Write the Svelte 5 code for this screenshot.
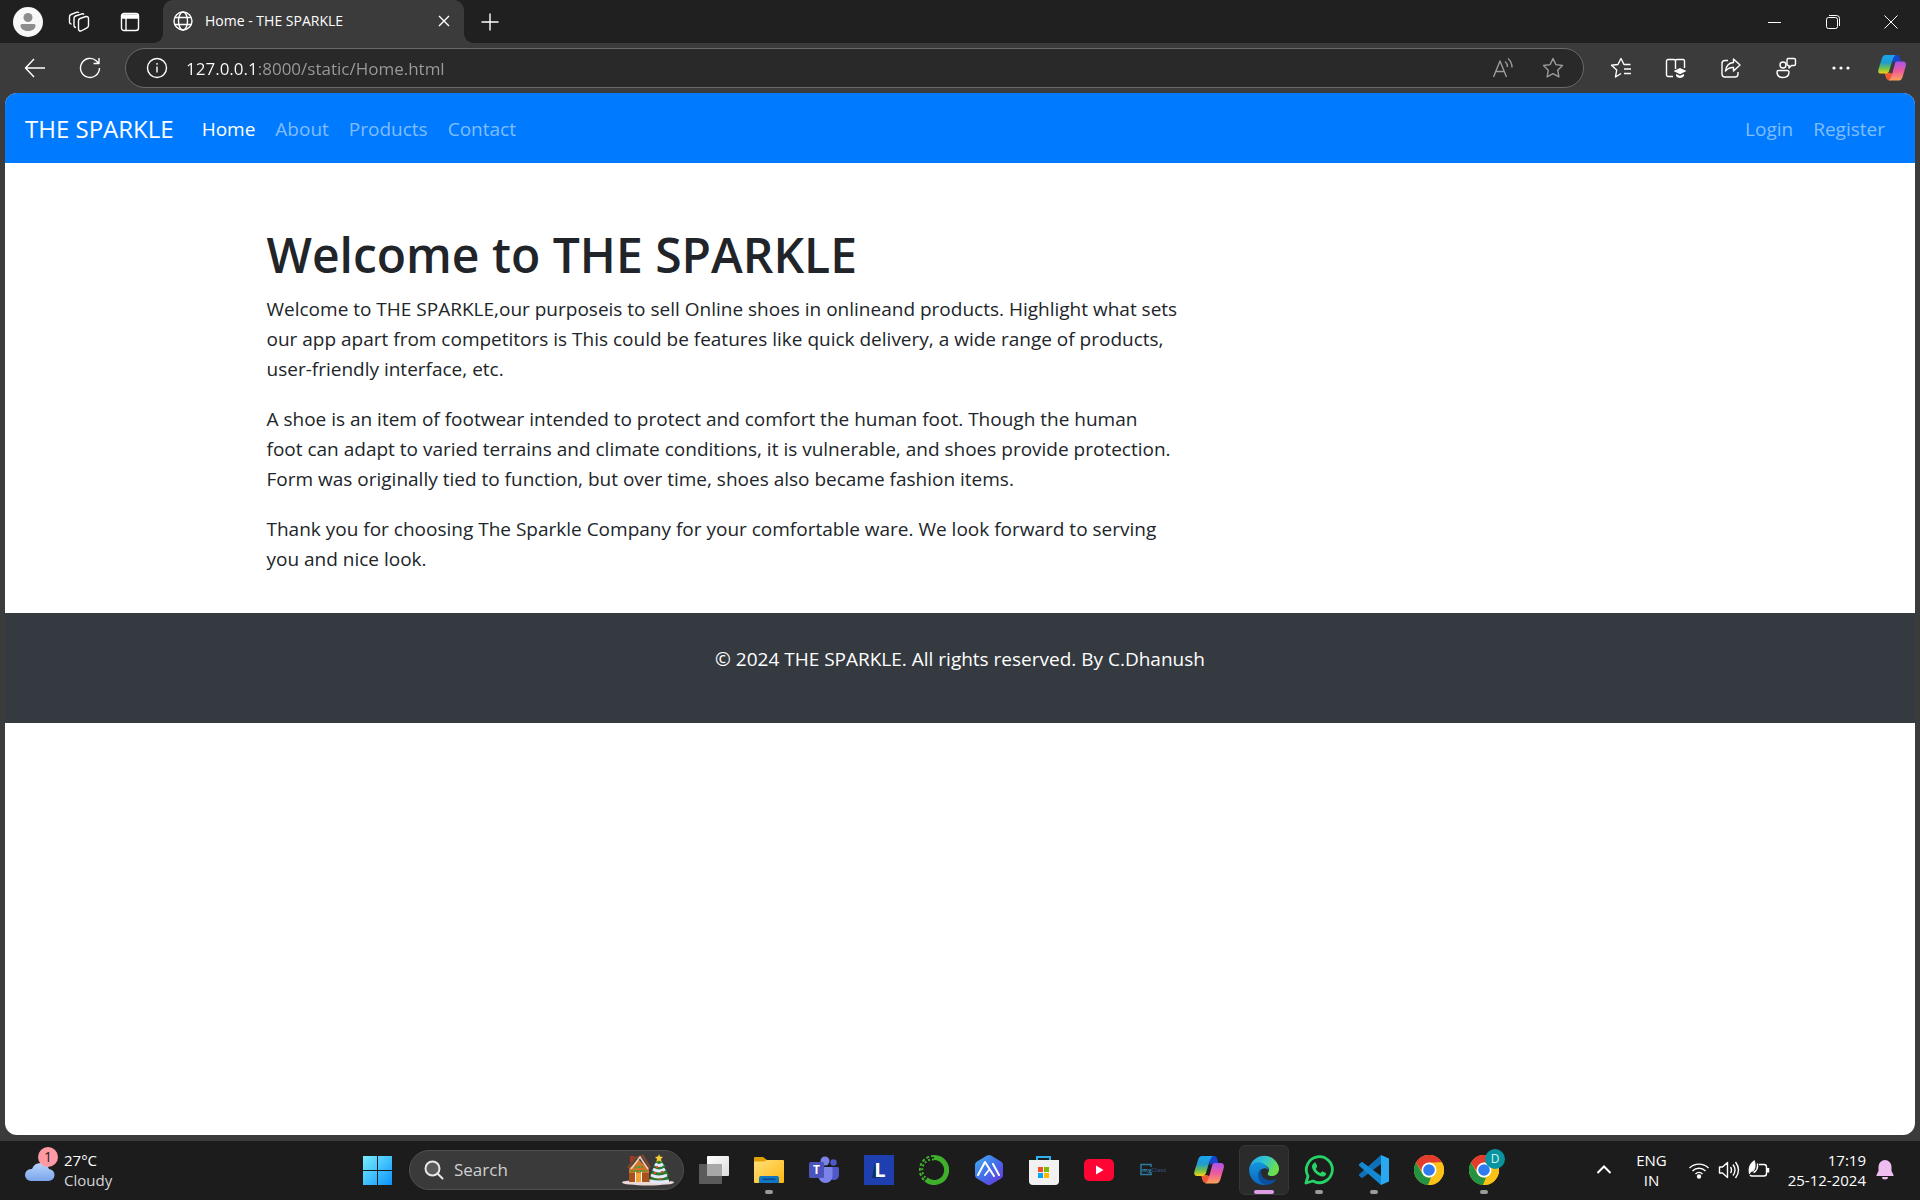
<script>
  const leftLinks = ['Home', 'About', 'Products', 'Contact'];
  const rightLinks = ['Login', 'Register'];
  const apps = [
    { id: 'taskview', label: 'Task view' },
    { id: 'explorer', label: 'File Explorer', state: 'open' },
    { id: 'teams', label: 'Teams' },
    { id: 'letter', label: 'L app' },
    { id: 'anaconda', label: 'Anaconda' },
    { id: 'hexagon', label: 'AI studio' },
    { id: 'store', label: 'Store' },
    { id: 'youtube', label: 'YouTube' },
    { id: 'portal', label: 'Portal' },
    { id: 'copilot', label: 'Copilot' },
    { id: 'edge', label: 'Edge', state: 'active' },
    { id: 'whatsapp', label: 'WhatsApp', state: 'open' },
    { id: 'vscode', label: 'VS Code', state: 'open' },
    { id: 'chrome', label: 'Chrome' },
    { id: 'profile', label: 'Chrome profile', state: 'open' }
  ];
  let address = $state('127.0.0.1:8000/static/Home.html');
  let query = $state('');
</script>

{#snippet copilot(size, key)}
  <svg width={size} height={size} viewBox="0 0 30 30">
    <defs>
      <linearGradient id="{key}a" x1="0" y1="0" x2="0" y2="1"><stop offset="0" stop-color="#1aa5f0" /><stop offset=".4" stop-color="#1f9bd0" /><stop offset=".72" stop-color="#6fc04c" /><stop offset="1" stop-color="#f5d414" /></linearGradient>
      <linearGradient id="{key}b" x1="0" y1="0" x2="0" y2="1"><stop offset="0" stop-color="#a954ee" /><stop offset=".5" stop-color="#ee5a9c" /><stop offset="1" stop-color="#ffa357" /></linearGradient>
    </defs>
    <path d="M16 1h4c2 0 2.600 1 3.200 3l1.300 4h-5l-4 2z" fill="#1745cf" />
    <path d="M7 20h6l4 2-3 6h-2c-2 0-3-1-3.600-3z" fill="#ef5a35" />
    <path d="M8 1h11c-2 1-3 4-4 7l-3 10c-.6 2-2 3-4 3H3c-3 0-3-3-2.400-5L4 5c.8-2.500 2-4 4-4z" fill="url(#{key}a)" />
    <path d="M20 8h7c3 0 3.400 3 2.600 5.500L26.500 24c-.8 3-2.500 4.500-4.500 4.500H11c2-1 3-3 4-6.500l3-11c.4-2 1-3 2-3z" fill="url(#{key}b)" />
  </svg>
{/snippet}

{#snippet chrome()}
  <circle cx="15" cy="15" r="15" fill="#fbc116" />
  <path d="M2 7.500A15 15 0 0 1 28 7.500H15L9 18z" fill="#e33b2e" />
  <path d="M2 7.500 8.500 18.800A7.500 7.500 0 0 0 17 22.200L14 30A15 15 0 0 1 2 7.500z" fill="#229342" />
  <path d="M14 30l7.500-11.200A7.500 7.500 0 0 0 21.500 7.500H28A15 15 0 0 1 14 30z" fill="#fbc116" />
  <circle cx="15" cy="15" r="7.500" fill="#fff" />
  <circle cx="15" cy="15" r="5.800" fill="#2f7bf0" />
{/snippet}

{#snippet appIcon(id)}
  {#if id === 'copilot'}
    {@render copilot(30, 'task')}
  {:else}
    <svg width="30" height="30" viewBox="0 0 30 30">
      {#if id === 'taskview'}
        <defs><linearGradient id="tv" x1="0" y1="0" x2="1" y2="1"><stop stop-color="#fff" /><stop offset="1" stop-color="#dcdcdc" /></linearGradient></defs>
        <rect x="8" y="1" width="22" height="20" rx="1" fill="url(#tv)" />
        <rect x="0" y="9" width="23" height="20" rx="1" fill="#5b5b5b" />
        <path d="M8 9h15v12H8z" fill="#a8a8a8" />
      {:else if id === 'explorer'}
        <defs><linearGradient id="fo" x1="0" y1="0" x2="1" y2="1"><stop stop-color="#ffe07a" /><stop offset="1" stop-color="#ffb70f" /></linearGradient></defs>
        <path d="M0 3a1 1 0 0 1 1-1h8l4 3v6H0z" fill="#e0a008" />
        <path d="M0 6.500h10l3-1.500h16a1 1 0 0 1 1 1v21a1 1 0 0 1-1 1H1a1 1 0 0 1-1-1z" fill="url(#fo)" />
        <path d="M5 28v-5a2 2 0 0 1 2-2h16a2 2 0 0 1 2 2v5z" fill="#0f75c4" />
        <rect x="8.500" y="23.500" width="13" height="1.500" rx=".7" fill="#0a4a84" />
      {:else if id === 'teams'}
        <circle cx="24.500" cy="7.500" r="3.200" fill="#5059c9" />
        <path d="M19 12h9.500a1.500 1.500 0 0 1 1.500 1.500V20a5 5 0 0 1-8 4z" fill="#5059c9" />
        <circle cx="16" cy="6" r="4.500" fill="#7b83eb" />
        <path d="M10 12h12.500a1 1 0 0 1 1 1v8a7 7 0 0 1-14 0z" fill="#7b83eb" />
        <rect x="0" y="7" width="15" height="16" rx="1.500" fill="#4b53bc" />
        <text x="7.500" y="19" text-anchor="middle" font-size="12" font-weight="700" fill="#fff">T</text>
      {:else if id === 'letter'}
        <path d="M0 0h30v30H0z" fill="#1d3fb0" />
        <path d="M11 7 8 23h8l-3-3z" fill="#0d3059" />
        <text x="16" y="22" text-anchor="middle" font-size="20" font-weight="700" fill="#fff">L</text>
      {:else if id === 'anaconda'}
        <path d="M15 2.500a12.500 12.500 0 1 1-8 22" fill="none" stroke="#3eb02a" stroke-width="5" />
        <path d="M15 1A14 14 0 0 0 5 25" fill="none" stroke="#3eb02a" stroke-width="2" stroke-dasharray="3 2" />
        <path d="M15 4.500A10.500 10.500 0 0 0 7 23" fill="none" stroke="#3eb02a" stroke-width="2" stroke-dasharray="2 2" />
      {:else if id === 'hexagon'}
        <defs><linearGradient id="hx" x1="0" y1="0" x2="1" y2="1"><stop stop-color="#45b0f5" /><stop offset=".5" stop-color="#426fe8" /><stop offset="1" stop-color="#6f2ee0" /></linearGradient></defs>
        <path d="M13 .6a4 4 0 0 1 4 0l10 5.800a4 4 0 0 1 2 3.400v10.400a4 4 0 0 1-2 3.400l-10 5.800a4 4 0 0 1-4 0L3 23.600a4 4 0 0 1-2-3.400V9.800a4 4 0 0 1 2-3.400z" fill="url(#hx)" />
        <path d="M4 20 11 7l9 14M11 20l4-5M19 9l6 11" fill="none" stroke="#fff" stroke-width="2" stroke-linecap="round" stroke-linejoin="round" />
      {:else if id === 'store'}
        <path d="M8 7V2h13v5" fill="none" stroke="#2cb1ee" stroke-width="2" />
        <path d="M0 5h30v21a4 4 0 0 1-4 4H4a4 4 0 0 1-4-4z" fill="#f1f1f1" />
        <path d="M9 12h5v5H9z" fill="#f25022" /><path d="M15 12h5v5h-5z" fill="#7fba00" />
        <path d="M9 18h5v5H9z" fill="#00a4ef" /><path d="M15 18h5v5h-5z" fill="#ffb900" />
      {:else if id === 'youtube'}
        <rect y="4" width="30" height="22" rx="5" fill="#ff0533" />
        <path d="M12 10.500v9l7.500-4.500z" fill="#fff" />
      {:else if id === 'portal'}
        <path d="M12 12V9.500H2v10h10V17" fill="none" stroke="#2d7ba0" stroke-width="1.500" />
        <text x="3" y="17" font-size="6" font-weight="700" fill="#3389b0">my</text>
        <text x="12" y="17" font-size="6" font-weight="700" fill="#2f4466">Class</text>
      {:else if id === 'edge'}
        <defs>
          <linearGradient id="eg" x1="0" y1="0" x2="1" y2=".4"><stop stop-color="#249fe0" /><stop offset=".5" stop-color="#2fc4d5" /><stop offset="1" stop-color="#6be04a" /></linearGradient>
          <linearGradient id="eb" x1="0" y1="0" x2="0" y2="1"><stop stop-color="#1595df" /><stop offset="1" stop-color="#0c66bd" /></linearGradient>
        </defs>
        <path d="M.5 13A15 15 0 0 1 30 13c.3 5-3 8-7 8-3 0-5-1-4-3 2-3 1-7-4-8C9 8 3 9 .5 13z" fill="url(#eg)" />
        <path d="M.3 13C3 7 10 6 15 9c3 2 4 4 4 6-2-3-7-2-8 2-1 5 3 9 7 10l-1 3A15 15 0 0 1 .3 13z" fill="url(#eb)" />
        <path d="M12 14c-5 4-3 13 4 16 5 .3 9-2 11.500-6-6 3-13 1-15-4-.7-2-.8-4-.5-6z" fill="#0b4f9f" />
      {:else if id === 'whatsapp'}
        <path d="M2 28l2-7A13 13 0 1 1 9 26z" fill="#1d1d1d" stroke="#25d366" stroke-width="2.800" stroke-linejoin="round" />
        <path d="M10 8c1-1 2 0 2.300 1l1 2.500-1.500 2.200c1 2 2.500 3.500 4.600 4.400l1.800-1.900 3.300 1.600c1 .5.800 1.500 0 2.500-1.500 1.700-4 1.500-7 0-3.300-1.700-6-5-6.500-8-.3-2 .8-3.300 2-4.300z" fill="#25d366" />
      {:else if id === 'vscode'}
        <path d="M22 0 30 3.500v23L22 30z" fill="#2aa9f3" />
        <path d="M22 0v9L4 22.500a1.500 1.500 0 0 1-2 0l-1.600-1.600a1.300 1.300 0 0 1 0-2z" fill="#0f70b7" />
        <path d="M22 30v-9L4 7.500a1.500 1.500 0 0 0-2 0L.4 9a1.300 1.300 0 0 0 0 2z" fill="#1489d2" />
      {:else}
        {@render chrome()}
      {/if}
    </svg>
  {/if}
{/snippet}

<div class="desktop">
  <header class="tabs">
    <button class="avatar" aria-label="Profile">
      <svg width="30" height="30" viewBox="0 0 30 30"><circle cx="15" cy="15" r="15" fill="#f8f8f8" /><circle cx="15" cy="10.500" r="4.500" fill="#8d8d8d" /><path d="M9 17h12a1.500 1.500 0 0 1 1.500 1.500c0 4-4 5.500-7.500 5.500s-7.500-1.500-7.500-5.500A1.500 1.500 0 0 1 9 17z" fill="#8d8d8d" /></svg>
    </button>
    <button aria-label="Workspaces">
      <svg class="line" width="22" height="22" viewBox="0 0 22 22"><path d="M12 7.500 18 5.500a2 2 0 0 1 2.500 2v7a2.500 2.500 0 0 1-1.500 2.300L13 20a2 2 0 0 1-2.500-2V10a2.500 2.500 0 0 1 1.500-2.500z" /><path d="M8 16.500A2 2 0 0 1 6 15V7.500A2.500 2.500 0 0 1 7.500 5l6.500-2.200a2 2 0 0 1 2 .7M3.500 13A2 2 0 0 1 1.500 11V6A2.500 2.500 0 0 1 3 3.500L9 1.200a2 2 0 0 1 2 .5" /></svg>
    </button>
    <button aria-label="Tab actions">
      <svg class="line" width="20" height="20" viewBox="0 0 20 20"><rect x="1.500" y="1.500" width="17" height="17" rx="2.500" /><path d="M2 3h16v3H2z" fill="#fff" /><path d="M6 6v12" /></svg>
    </button>
    <div class="tab">
      <svg class="line globe" width="20" height="20" viewBox="0 0 20 20"><circle cx="10" cy="10" r="9" /><ellipse cx="10" cy="10" rx="4.500" ry="9" /><path d="M2 6.500h16M2 13.500h16" /></svg>
      <span class="title">Home - THE SPARKLE</span>
      <button aria-label="Close tab"><svg class="line" width="12" height="12" viewBox="0 0 12 12"><path d="m1 1 10 10M11 1 1 11" /></svg></button>
    </div>
    <button class="new" aria-label="New tab"><svg class="line" width="18" height="18" viewBox="0 0 18 18"><path d="M9 .5v17M.5 9h17" /></svg></button>
    <div class="window">
      <button aria-label="Minimize"><svg class="line thin" width="14" height="14" viewBox="0 0 14 14"><path d="M0 7.500h13" /></svg></button>
      <button aria-label="Restore"><svg class="line thin" width="14" height="14" viewBox="0 0 14 14"><rect x=".5" y="2.500" width="11" height="11" rx="2" /><path d="M3 .5h7.500a3 3 0 0 1 3 3V11" /></svg></button>
      <button aria-label="Close"><svg class="line thin" width="14" height="14" viewBox="0 0 14 14"><path d="m.5.500 13 13M13.500.500l-13 13" /></svg></button>
    </div>
  </header>

  <div class="toolbar">
    <button aria-label="Back"><svg class="line" width="22" height="22" viewBox="0 0 22 22"><path d="M21 11H1.500M10 2 1.500 11l8.500 9" /></svg></button>
    <button aria-label="Refresh"><svg class="line" width="22" height="22" viewBox="0 0 22 22"><path d="M20.500 11a9.500 9.500 0 1 1-3-7l2 2.200M20 1v5.500h-5.500" /></svg></button>
    <div class="omnibox">
      <svg class="line" width="22" height="22" viewBox="0 0 22 22"><circle cx="11" cy="11" r="9.500" /><path d="M11 9.500v6M11 6v1.800" /></svg>
      <input class="url" aria-label="Address" bind:value={address} />
      <button aria-label="Read aloud"><svg class="line dim" width="22" height="22" viewBox="0 0 22 22"><path d="M1.500 20 8 4l6.500 16M4 14.500h8M13 4.500c2 1.500 2.500 3 2.500 5.500M16 1.500c3 2.500 4 5 4 9" /></svg></button>
      <button aria-label="Add to favorites"><svg class="line dim" width="22" height="22" viewBox="0 0 22 22"><path d="m11 1.500 2.900 6.100 6.600.9-4.800 4.700 1.200 6.700-5.900-3.200-5.900 3.200 1.200-6.700L1.500 8.500l6.600-.9z" /></svg></button>
    </div>
    <div class="tools">
      <button aria-label="Favorites"><svg class="line" width="22" height="22" viewBox="0 0 22 22"><path d="M11 16.500 5.500 20l1.200-7L1.500 8.300l6.400-.8L11 1.500l3 6h6.500M14 12h7M14 16.500h7" /></svg></button>
      <button aria-label="Reading view"><svg class="line" width="22" height="22" viewBox="0 0 22 22"><path d="M8 19.500H3A1.500 1.500 0 0 1 1.500 18V4A1.500 1.500 0 0 1 3 2.500h6A1.500 1.500 0 0 1 10.500 4v8M10.500 4A1.500 1.500 0 0 1 12 2.500h6A1.500 1.500 0 0 1 19.500 4v7" /><path class="solid" d="m8.500 14 6.500-3 6.500 3-6.500 3.200zM11 17l4 1.800 4-1.800v2c-2 2.500-6 2.500-8 0z" /></svg></button>
      <button aria-label="Share"><svg class="line" width="22" height="22" viewBox="0 0 22 22"><path d="M8 3.500H5A3 3 0 0 0 2 6.500V17a3 3 0 0 0 3 3h10a3 3 0 0 0 3-3v-2M13.500 2l6.500 6-6.500 6v-3.500c-4-.3-6 1-8 3.500.5-5 3-8 8-8.500z" /></svg></button>
      <button aria-label="Feedback"><svg class="line" width="22" height="22" viewBox="0 0 22 22"><circle cx="8" cy="8" r="3" /><path d="M3.500 13.500h9A1.500 1.500 0 0 1 14 15c0 4-3 5.500-6 5.500S2 19 2 15a1.500 1.500 0 0 1 1.500-1.500zM13 1.500h6A1.500 1.500 0 0 1 20.500 3v4A1.500 1.500 0 0 1 19 8.500h-2.500L14 11V8.500a1.500 1.500 0 0 1-2-1.500V3a1.500 1.500 0 0 1 1-1.500z" /></svg></button>
      <button aria-label="Settings and more"><svg width="18" height="18" viewBox="0 0 18 18" fill="#fff"><circle cx="2" cy="9" r="1.600" /><circle cx="9" cy="9" r="1.600" /><circle cx="16" cy="9" r="1.600" /></svg></button>
      <button aria-label="Copilot">{@render copilot(28, 'bar')}</button>
    </div>
  </div>

  <div class="page">
    <nav>
      <a class="brand" href="#home">THE SPARKLE</a>
      {#each leftLinks as link, i}
        <a class="link" class:current={i === 0} href="#{link}">{link}</a>
      {/each}
      <span class="spacer"></span>
      {#each rightLinks as link}
        <a class="link" href="#{link}">{link}</a>
      {/each}
    </nav>
    <main>
      <div class="copy">
        <h1>Welcome to THE SPARKLE</h1>
        <p>Welcome to THE SPARKLE,our purposeis to sell Online shoes in onlineand products. Highlight what sets our app apart from competitors is This could be features like quick delivery, a wide range of products, user-friendly interface, etc.</p>
        <p>A shoe is an item of footwear intended to protect and comfort the human foot. Though the human foot can adapt to varied terrains and climate conditions, it is vulnerable, and shoes provide protection. Form was originally tied to function, but over time, shoes also became fashion items.</p>
        <p>Thank you for choosing The Sparkle Company for your comfortable ware. We look forward to serving you and nice look.</p>
      </div>
    </main>
    <footer><p>© 2024 THE SPARKLE. All rights reserved. By C.Dhanush</p></footer>
  </div>

  <div class="taskbar">
    <button class="weather">
      <span class="cloud">
        <svg width="32" height="26" viewBox="0 0 32 26"><defs><linearGradient id="cl" x1="0" y1="0" x2="0" y2="1"><stop stop-color="#b8d4fb" /><stop offset="1" stop-color="#7aa5ec" /></linearGradient></defs><path d="M7 24a6 6 0 0 1 0-12h1a9 9 0 0 1 17 0 6 6 0 0 1-1 12z" fill="url(#cl)" /></svg>
        <span class="badge">1</span>
      </span>
      <span class="reading"><b>27°C</b><span>Cloudy</span></span>
    </button>

    <div class="dock">
      <button class="app" aria-label="Start">
        <svg width="30" height="30" viewBox="0 0 30 30"><defs><linearGradient id="st" gradientUnits="userSpaceOnUse" x1="0" y1="0" x2="30" y2="30"><stop stop-color="#7df0ff" /><stop offset="1" stop-color="#0a94fb" /></linearGradient></defs><path d="M1 1h14v14H1zM16 1h14v14H16zM1 16h14v14H1zM16 16h14v14H16z" fill="url(#st)" /></svg>
      </button>
      <label class="search">
        <svg width="20" height="20" viewBox="0 0 20 20" fill="none" stroke="#e8e8e8" stroke-width="2"><circle cx="8.500" cy="8.500" r="7" fill="#5a5a5a" /><path d="m13.500 13.500 5 5" stroke-linecap="round" /></svg>
        <input aria-label="Search" placeholder="Search" bind:value={query} />
        <svg width="54" height="32" viewBox="0 0 54 32">
          <ellipse cx="27" cy="28.500" rx="26" ry="3" fill="#ead9d6" />
          <path d="M8 13h20v15H8z" fill="#a9501c" /><path d="m8 15 9-10 11 10v4H8z" fill="#d0742a" />
          <path d="M9 2h4v6H9z" fill="#a8381f" />
          <path d="m7 14 7-10 8-2 7 12" fill="none" stroke="#79452f" stroke-width="2.500" />
          <path d="m10 15 9-12 8 12" fill="none" stroke="#eed5c5" stroke-width="1.500" />
          <path d="M15 19h5v9h-5z" fill="#f2a33b" /><path d="M14 28V18h1v10zM20 28V18h1v10z" fill="#fff" />
          <path d="M14 13h9M10 17h16" stroke="#4b9b38" stroke-width="2" stroke-dasharray="2 1" />
          <path d="m38 3 7 10h-2l5 8h-2l3 7H28l3-7h-2l5-8h-2z" fill="#30792c" />
          <path d="M34 10q4 3 8 0M32 15q6 4 12 0M30 21q8 4 16 0M29 27q9 2 19 0" fill="none" stroke="#e1eaff" stroke-width="3" />
          <path d="m38 0 1 2.500 3 .5-2 2 .5 3-2.500-1.500L35.500 8l.5-3-2-2 3-.5z" fill="#f8cc37" />
          <path d="M35 12h2v2h-2zM40 17h2v2h-2zM33 18h2v2h-2zM38 24h2v2h-2z" fill="#e2463b" />
        </svg>
      </label>
      {#each apps as app}
        <button class="app {app.state ?? ''}" aria-label={app.label}>
          {@render appIcon(app.id)}
          {#if app.id === 'profile'}<span class="initial">D</span>{/if}
        </button>
      {/each}
    </div>

    <div class="tray">
      <button aria-label="Show hidden icons"><svg width="16" height="16" viewBox="0 0 16 16" fill="none" stroke="#fff" stroke-width="2"><path d="m1.500 11 6.500-6.500 6.500 6.500" /></svg></button>
      <button class="lang">ENG<br />IN</button>
      <button class="quick" aria-label="Network, volume, battery">
        <svg class="line" width="22" height="22" viewBox="0 0 22 22"><path d="M1.500 9a13.500 13.500 0 0 1 19 0M4.500 12a9.200 9.200 0 0 1 13 0M7.500 15a5 5 0 0 1 7 0" /><circle cx="11" cy="17.500" r="1.500" fill="#fff" /></svg>
        <svg class="line" width="22" height="22" viewBox="0 0 22 22"><path d="M1.500 8h3l5-4.500v15l-5-4.500h-3zM12.500 8q2 3 0 6M15 5.500q4 5.500 0 11M17.500 3q6 8 0 16" /></svg>
        <svg class="line" width="22" height="22" viewBox="0 0 22 22"><path d="M11 5.500h5A2.500 2.500 0 0 1 18.500 8v6.500A2.500 2.500 0 0 1 16 17H4a2.500 2.500 0 0 1-2-1" /><path d="M20 9v4.500" stroke-width="2.500" /><path class="solid" d="M1 15C0 9 1 5 6.500 1c.3 1.500 1 2 1 4.500C8 10 5.500 13 3 13l-1.200 2z" /><path d="M9.500 4.500c.5 4-1 7.500-4 9" /></svg>
      </button>
      <button class="clock">17:19<br />25-12-2024</button>
      <button aria-label="Notifications"><svg width="18" height="20" viewBox="0 0 18 20" fill="#efbdf2"><path d="M9 0a6.500 6.500 0 0 1 6.500 6.500V11l2 4v1H.500v-1l2-4V6.500A6.500 6.500 0 0 1 9 0zM6 17h6a3 2.500 0 0 1-6 0z" /></svg></button>
    </div>
  </div>
</div>

<style>
  :global(body) { margin: 0; background: #3b3b3b; }
  .desktop {
    display: flex;
    flex-direction: column;
    min-height: 100vh;
    font-family: "Open Sans", "Noto Sans", sans-serif;
    color: #fff;
  }
  button { display: flex; align-items: center; justify-content: center; padding: 0; border: 0; background: none; color: inherit; font: inherit; }
  input { min-width: 0; padding: 0; border: 0; outline: 0; background: none; font: inherit; color: inherit; }
  svg { display: block; flex: none; }
  a { color: inherit; text-decoration: none; }
  .line { fill: none; stroke: #fff; stroke-width: 1.4; stroke-linejoin: round; }
  .thin { stroke-width: 1; }
  .dim { stroke: #9b9b9b; }
  .solid { fill: #fff; stroke: none; }

  .tabs { display: flex; align-items: center; height: 43px; padding-left: 2px; background: #202020; }
  .tabs > button { width: 51px; height: 42px; }
  .tab {
    position: relative;
    display: flex;
    align-items: center;
    align-self: stretch;
    gap: 12px;
    width: 301px;
    margin-left: 8px;
    padding: 0 14px 2px 10px;
    box-sizing: border-box;
    border-radius: 10px 10px 0 0;
    background: #3b3b3b;
    font-size: 14px;
  }
  .tab::before, .tab::after { content: ""; position: absolute; bottom: 0; width: 10px; height: 10px; }
  .tab::before { right: 100%; background: radial-gradient(circle at 0 0, #202020 10px, #3b3b3b 10px); }
  .tab::after { left: 100%; background: radial-gradient(circle at 100% 0, #202020 10px, #3b3b3b 10px); }
  .title { flex: 1; }
  .window { display: flex; margin-left: auto; }
  .window button { width: 58px; height: 42px; }

  .toolbar { display: flex; align-items: center; height: 50px; padding: 0 5px 0 7px; }
  .toolbar > button { width: 55px; height: 40px; }
  .omnibox {
    display: flex;
    flex: 1;
    align-items: center;
    height: 40px;
    margin-left: 8px;
    padding: 0 19px 0 20px;
    box-sizing: border-box;
    border: 1px solid #6a6a6a;
    border-radius: 20px;
    background: #292929;
    font-size: 17px;
  }
  .url {
    flex: 1;
    margin-left: 18px;
    color: transparent;
    caret-color: #fff;
    background: linear-gradient(90deg, #fff 71px, #9b9b9b 71px);
    background-clip: text;
  }
  .omnibox button { width: 22px; margin-left: 28px; }
  .tools { display: flex; align-items: center; margin-left: 9px; }
  .tools button { width: 55px; height: 40px; }
  .tools button:last-child { width: 47px; }

  .page {
    flex: 1;
    margin: 0 5px;
    overflow: hidden;
    border-radius: 12px;
    background: #fff;
    color: #212529;
    font-size: 19px;
    line-height: 30px;
  }
  nav { display: flex; align-items: center; height: 70px; padding: 2px 20px 0; box-sizing: border-box; background: #007bff; color: #fff; }
  .brand { margin-right: 18px; font-size: 24px; }
  .link { padding: 10px; color: #80bdff; }
  .current { color: #fff; }
  .spacer { flex: 1; }
  main { width: 1425px; max-width: 100%; margin: 0 auto; padding: 62px 19px 19px; box-sizing: border-box; }
  .copy { max-width: 911px; }
  h1 { margin: 0 0 9px; font-size: 48px; font-weight: 600; line-height: 60px; }
  p { margin: 0 0 20px; }
  footer { padding: 31px 30px 29px; background: #343a40; color: #fff; text-align: center; }

  .taskbar {
    display: grid;
    grid-template-columns: 352fr auto 411fr;
    align-items: center;
    height: 59px;
    margin-top: 6px;
    padding-bottom: 2px;
    box-sizing: border-box;
    background: #1c1c1c;
    font-size: 15px;
    line-height: 20px;
  }
  .weather { justify-self: start; gap: 8px; padding-left: 24px; text-align: left; }
  .cloud { position: relative; }
  .badge {
    position: absolute;
    top: -10px;
    right: -2px;
    width: 20px;
    height: 20px;
    border-radius: 10px;
    background: #ff99a4;
    color: #222;
    font-size: 14px;
    text-align: center;
  }
  .reading { display: grid; color: #d5d5d5; }
  .reading b { color: #fff; font-weight: 400; }
  .dock { display: flex; align-items: center; gap: 5px; }
  .app { position: relative; width: 50px; height: 50px; box-sizing: border-box; }
  .open::after, .active::after {
    content: "";
    position: absolute;
    bottom: 1px;
    width: 8px;
    height: 4px;
    border-radius: 2px;
    background: #9b9b9b;
  }
  .active { border: 1px solid #363636; border-radius: 6px; background: #2b2b2b; }
  .active::after { bottom: 0; width: 20px; background: #dd9ee5; }
  .initial {
    position: absolute;
    top: 4px;
    right: 4px;
    width: 20px;
    height: 20px;
    border-radius: 10px;
    background: #0794a0;
    font-size: 12px;
    color: #d3f1f3;
  }
  .search {
    display: flex;
    align-items: center;
    width: 275px;
    height: 40px;
    margin-left: 2px;
    padding: 0 8px 0 14px;
    box-sizing: border-box;
    border: 1px solid #505050;
    border-radius: 20px;
    background: #3a3a3a;
    font-size: 17px;
  }
  .search input { flex: 1; margin-left: 10px; }
  .search input::placeholder { color: #d0d0d0; opacity: 1; }
  .tray { display: flex; align-items: center; justify-self: end; padding-right: 26px; }
  .lang { margin-left: 24px; }
  .quick { gap: 8px; margin-left: 21px; }
  .clock { margin-left: 18px; text-align: right; }
  .tray button:last-child { margin-left: 10px; }
</style>
